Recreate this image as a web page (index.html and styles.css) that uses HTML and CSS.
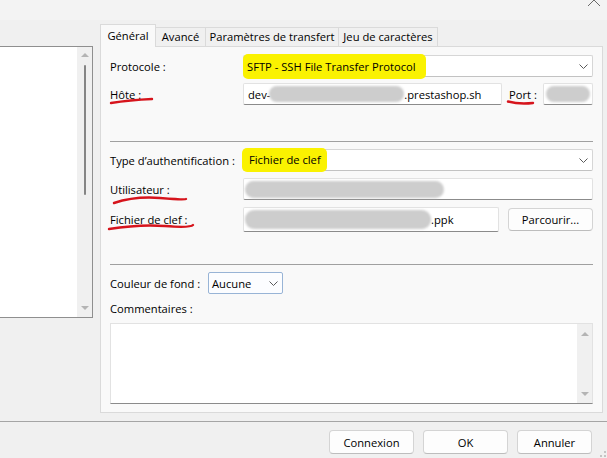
FILE: index.html
```html
<!DOCTYPE html>
<html lang="fr">
<head>
    <meta charset="UTF-8">
    <meta name="viewport" content="width=device-width, initial-scale=1.0">
    <title>Gestionnaire de Sites</title>
    <link rel="stylesheet" href="styles.css">
</head>
<body>
    <div class="titlebar">
        <svg class="close" width="14" height="14" viewBox="0 0 14 14"><path d="M1 1 L13 13 M13 1 L1 13"/></svg>
    </div>

    <div class="main">
        <!-- site tree on the left, mostly cut off -->
        <div class="site-list">
            <div class="list-body"></div>
            <div class="vscroll">
                <span class="arrow up"></span>
                <span class="thumb"></span>
                <span class="arrow down"></span>
            </div>
        </div>

        <div class="tabs">
            <div class="tabbar">
                <div class="tab active tab-general">Général</div>
                <div class="tab tab-advanced">Avancé</div>
                <div class="tab tab-transfer">Paramètres de transfert</div>
                <div class="tab tab-charset">Jeu de caractères</div>
            </div>

            <div class="page">
                <div class="row row-protocol">
                    <div class="label">Protocole :</div>
                    <div class="combo wide">
                        <span class="hl hl-protocol">SFTP - SSH File Transfer Protocol</span>
                        <svg class="chev" width="9" height="5" viewBox="0 0 9 5"><path d="M0.5 0.5 L4.5 4.5 L8.5 0.5"/></svg>
                    </div>
                </div>

                <div class="row row-host">
                    <div class="label">Hôte :</div>
                    <div class="field host">dev-<span class="blob b-host"></span>.prestashop.sh</div>
                    <div class="port-label">Port :</div>
                    <div class="field port"><span class="blob b-port"></span></div>
                    <svg class="mark m-host" width="46" height="8"><path d="M1 6 Q20 3 42 2"/></svg>
                    <svg class="mark m-port" width="30" height="8"><path d="M1 2.5 Q12 5.5 26 4"/></svg>
                </div>

                <div class="sep sep-1"></div>

                <div class="row row-auth">
                    <div class="label">Type d’authentification :</div>
                    <div class="combo wide">
                        <span class="hl hl-auth">Fichier de clef</span>
                        <svg class="chev" width="9" height="5" viewBox="0 0 9 5"><path d="M0.5 0.5 L4.5 4.5 L8.5 0.5"/></svg>
                    </div>
                </div>

                <div class="row row-user">
                    <div class="label">Utilisateur :</div>
                    <div class="field user"><span class="blob b-user"></span></div>
                    <svg class="mark m-user" width="80" height="28"><path d="M4 25 Q25 18 50 20 T76 21"/></svg>
                </div>

                <div class="row row-key">
                    <div class="label">Fichier de clef :</div>
                    <div class="field keyfile"><span class="blob b-key"></span>.ppk</div>
                    <button class="btn browse">Parcourir...</button>
                    <svg class="mark m-key" width="90" height="26"><path d="M2 22 Q33 17 58 19 T86 18"/></svg>
                </div>

                <div class="sep sep-2"></div>

                <div class="row row-color">
                    <div class="label short">Couleur de fond :</div>
                    <div class="combo color">
                        Aucune
                        <svg class="chev" width="9" height="5" viewBox="0 0 9 5"><path d="M0.5 0.5 L4.5 4.5 L8.5 0.5"/></svg>
                    </div>
                </div>

                <div class="notes-label">Commentaires :</div>
                <div class="notes">
                    <div class="vscroll small">
                        <span class="arrow up"></span>
                        <span class="arrow down"></span>
                    </div>
                </div>
            </div>
        </div>
    </div>

    <div class="footer">
        <button class="btn">Connexion</button>
        <button class="btn">OK</button>
        <button class="btn cancel">Annuler</button>
        <svg class="grip" width="8" height="10" viewBox="0 0 8 10">
            <rect x="5" y="1" width="2" height="2"/>
            <rect x="5" y="5" width="2" height="2"/>
            <rect x="1" y="5" width="2" height="2"/>
            <rect x="5" y="9" width="2" height="2"/>
            <rect x="1" y="9" width="2" height="2"/>
        </svg>
    </div>
</body>
</html>
```

FILE: styles.css
```css
body {
    margin: 0;
    width: 607px;
    height: 458px;
    overflow: hidden;
    background: #f0f0f0;
    font-family: "Open Sans", "Noto Sans", sans-serif;
    font-size: 11.2px;
    color: #000;
}

.titlebar {
    height: 20px;
    background: #f3f3f3;
    position: relative;
}
.close {
    position: absolute;
    right: 6px;
    top: -7px;
    fill: none;
    stroke: #6a6a6a;
    stroke-width: 1;
}

.main {
    display: flex;
    height: 401px;
    padding-top: 4px;
    box-sizing: border-box;
}

/* left list */
.site-list {
    margin-top: 22px;
    width: 93px;
    height: 272px;
    box-sizing: border-box;
    background: #fff;
    border: 1px solid #8f8f8f;
    border-left: none;
    display: flex;
}
.list-body {
    flex: 1;
}
.vscroll {
    width: 15px;
    background: #f0f0f0;
    display: flex;
    flex-direction: column;
    align-items: center;
    padding: 6px 0 7px;
    box-sizing: border-box;
}
.arrow {
    width: 0;
    height: 0;
    border-left: 4px solid transparent;
    border-right: 4px solid transparent;
}
.arrow.up {
    border-bottom: 4px solid #b4b4b4;
}
.arrow.down {
    margin-top: auto;
    border-top: 4px solid #b4b4b4;
}
.thumb {
    width: 2px;
    height: 130px;
    margin-top: 8px;
    background: #858585;
    border-radius: 1px;
}

/* tab control */
.tabs {
    margin-left: 7px;
    width: 503px;
}
.tabbar {
    display: flex;
    align-items: flex-end;
    height: 22px;
}
.tab {
    height: 19px;
    line-height: 18px;
    margin-left: -1px;
    border: 1px solid #dadada;
    border-bottom: none;
    box-sizing: border-box;
    background: #f0f0f0;
    text-align: center;
    white-space: nowrap;
}
.tab.active {
    position: relative;
    z-index: 1;
    height: 23px;
    line-height: 21px;
    margin-left: 0;
    margin-bottom: -1px;
    background: #f9f9f9;
}
.tab-general {
    width: 56px;
}
.tab-advanced {
    width: 51px;
}
.tab-transfer {
    width: 134px;
}
.tab-charset {
    width: 100px;
}
.page {
    height: 367px;
    box-sizing: border-box;
    border: 1px solid #dadada;
    background: #f9f9f9;
    padding: 8px 9px 0;
}

.row {
    display: flex;
    align-items: center;
    position: relative;
}
.label {
    width: 133px;
    flex: none;
    white-space: nowrap;
}
.label.short {
    width: 98px;
}

.field,
.combo {
    height: 22px;
    box-sizing: border-box;
    display: flex;
    align-items: center;
    padding-left: 4px;
    background: #fff;
    border: 1px solid #e2e2e2;
    border-bottom-color: #8b8b8b;
    border-radius: 2px;
    white-space: nowrap;
}
.combo {
    border-color: #d6d6d6;
    border-bottom-color: #c2c2c2;
}
.combo.wide {
    flex: 1;
}
.chev {
    margin-left: auto;
    margin-right: 4px;
    fill: none;
    stroke: #5a5a5a;
    stroke-width: 1;
}

.row-host,
.row-auth,
.row-user,
.row-key,
.row-color {
    margin-top: 7px;
}
.row-host {
    margin-top: 6px;
}
.field.host {
    width: 259px;
}
.port-label {
    margin-left: 7px;
    width: 34px;
}
.field.port {
    width: 50px;
    padding-left: 2px;
}
.field.user {
    flex: 1;
}
.field.keyfile {
    width: 256px;
    height: 25px;
}
.row-key .btn.browse {
    margin-left: 9px;
    width: 85px;
    height: 23px;
}

.combo.color {
    width: 75px;
    padding-left: 3px;
    border-color: #98b4d6;
    background: #fcfdff;
}

.sep {
    height: 1px;
    background: #a0a0a0;
}
.sep-1 {
    margin-top: 36px;
}
.sep-2 {
    margin-top: 32px;
}

.notes-label {
    margin-top: 7px;
    line-height: 16px;
}
.notes {
    margin-top: 6px;
    height: 81px;
    box-sizing: border-box;
    background: #fff;
    border: 1px solid #e2e2e2;
    border-bottom-color: #8b8b8b;
    display: flex;
    justify-content: flex-end;
}
.vscroll.small {
    padding: 8px 0 7px;
}

/* highlighter marks drawn over the screenshot */
.hl {
    background: #faf200;
    border-radius: 5px;
    line-height: 25px;
    margin: -2px 0;
}
.hl-protocol {
    margin-left: -5px;
    padding: 0 10px 0 4px;
}
.hl-auth {
    margin-left: -6px;
    padding: 0 6px 0 7px;
    line-height: 24px;
}
.blob {
    display: inline-block;
    background: #cdcdcd;
    border-radius: 9px;
    filter: blur(1px);
}
.b-host {
    width: 135px;
    height: 16px;
    margin-left: -1px;
}
.b-port {
    width: 44px;
    height: 16px;
}
.b-user {
    width: 199px;
    height: 17px;
    margin-left: -3px;
}
.b-key {
    width: 186px;
    height: 19px;
    margin-left: -3px;
}
.mark {
    position: absolute;
    overflow: visible;
    fill: none;
    stroke: #d6141c;
    stroke-width: 2.4;
    stroke-linecap: round;
}
.m-host {
    left: 0;
    top: 14px;
}
.m-port {
    left: 397px;
    top: 16px;
}
.m-user {
    left: 0;
    top: 0;
}
.m-key {
    left: -3px;
    top: 0;
}

/* bottom buttons */
.footer {
    position: relative;
    height: 37px;
    box-sizing: border-box;
    border-top: 1px solid #a5a5a5;
    display: flex;
    justify-content: flex-end;
    gap: 9px;
    padding: 8px 15px 0 0;
}
.btn {
    width: 85px;
    height: 24px;
    font: inherit;
    color: #000;
    background: #fdfdfd;
    border: 1px solid #d4d4d4;
    border-bottom-color: #bdbdbd;
    border-radius: 4px;
    padding: 0;
}
.btn.cancel {
    width: 75px;
}
.grip {
    position: absolute;
    right: 0;
    bottom: -2px;
    fill: #c4c4c4;
}
```
